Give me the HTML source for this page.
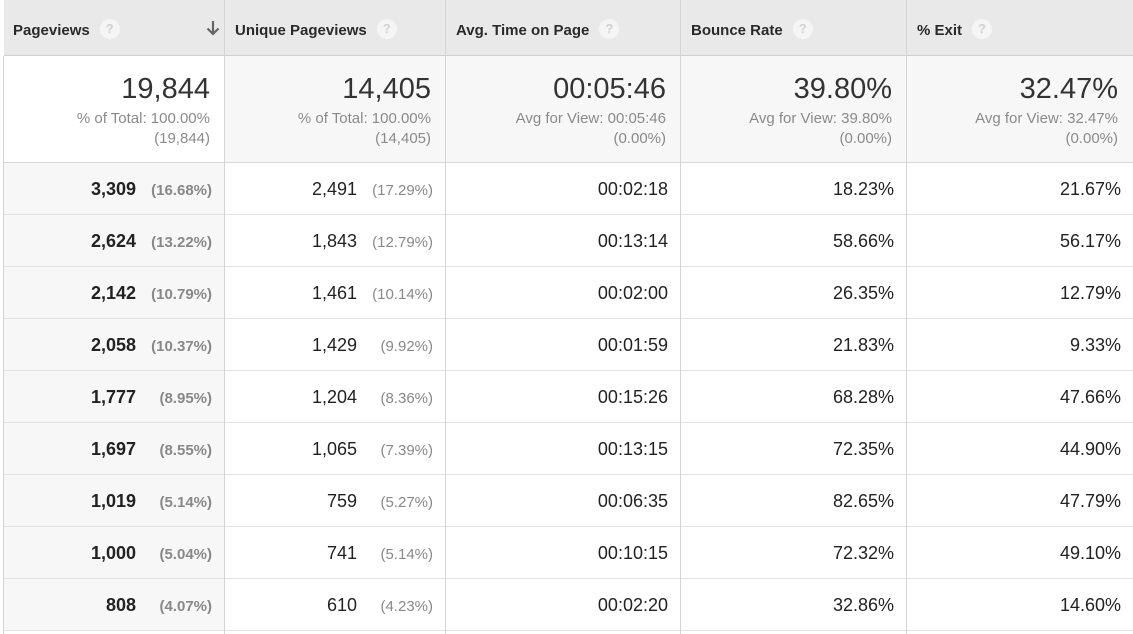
<!DOCTYPE html>
<html><head><meta charset="utf-8"><style>
*{margin:0;padding:0;box-sizing:border-box}
body{width:1133px;height:634px;overflow:hidden;background:#fff;font-family:"Liberation Sans",Arial,sans-serif;position:relative}
.col{position:absolute;top:0;height:634px;border-right:1px solid #d4d4d4}
.hd{position:absolute;top:0;left:0;right:0;height:56px;background:#e9e9e9;border-bottom:1px solid #cfcfcf;font-weight:bold;font-size:15px;color:#2a2a2a;padding:0 0 0 10px;line-height:62px;white-space:nowrap}
.q{display:inline-block;width:20px;height:20px;border-radius:50%;background:#f5f5f5;color:#d0d0d0;font-size:13px;text-align:center;line-height:20px;margin-left:10px;vertical-align:middle;position:relative;top:-2px;font-weight:bold}
.tot{position:absolute;top:56px;left:0;right:0;height:107px;border-bottom:1px solid #d8d8d8;text-align:right;padding:16px 14px 0 0;background:#f7f7f7}
.big{font-size:29px;color:#333;line-height:34px;margin-bottom:3px}
.sub{font-size:15px;color:#8a8a8a;line-height:20px}
.row{position:absolute;left:0;right:0;height:52px;border-bottom:1px solid #e2e2e2;text-align:right;padding-right:12px;font-size:18px;color:#222;line-height:52px}
.p{display:inline-block;width:76px;font-size:15px;color:#888;text-align:right}
.b{font-weight:bold}
</style></head><body>
<div style="position:absolute;left:3px;top:56px;width:1px;height:578px;background:#d4d4d4"></div>
<div class="col" style="left:4px;width:221px">
<div class="hd" style="padding-left:9px">Pageviews<span class="q">?</span><svg style="position:absolute;right:4px;top:20px" width="14" height="16" viewBox="0 0 14 16"><path d="M7 1V14M1.5 8.5L7 14L12.5 8.5" stroke="#666" stroke-width="2.2" fill="none"/></svg></div>
<div class="tot" style="background:#fff"><div class="big">19,844</div><div class="sub">% of Total: 100.00%</div><div class="sub">(19,844)</div></div>
</div>
<div class="col" style="left:225px;width:221px"><div class="hd">Unique Pageviews<span class="q">?</span></div>
<div class="tot"><div class="big">14,405</div><div class="sub">% of Total: 100.00%</div><div class="sub">(14,405)</div></div></div>
<div class="col" style="left:446px;width:235px"><div class="hd">Avg. Time on Page<span class="q">?</span></div>
<div class="tot"><div class="big">00:05:46</div><div class="sub">Avg for View: 00:05:46</div><div class="sub">(0.00%)</div></div></div>
<div class="col" style="left:681px;width:226px"><div class="hd">Bounce Rate<span class="q">?</span></div>
<div class="tot"><div class="big">39.80%</div><div class="sub">Avg for View: 39.80%</div><div class="sub">(0.00%)</div></div></div>
<div class="col" style="left:907px;width:226px;border-right:none"><div class="hd">% Exit<span class="q">?</span></div>
<div class="tot" style="padding-right:15px"><div class="big">32.47%</div><div class="sub">Avg for View: 32.47%</div><div class="sub">(0.00%)</div></div></div>
<script>
var d=[["3,309","16.68%","2,491","17.29%","00:02:18","18.23%","21.67%"],
["2,624","13.22%","1,843","12.79%","00:13:14","58.66%","56.17%"],
["2,142","10.79%","1,461","10.14%","00:02:00","26.35%","12.79%"],
["2,058","10.37%","1,429","9.92%","00:01:59","21.83%","9.33%"],
["1,777","8.95%","1,204","8.36%","00:15:26","68.28%","47.66%"],
["1,697","8.55%","1,065","7.39%","00:13:15","72.35%","44.90%"],
["1,019","5.14%","759","5.27%","00:06:35","82.65%","47.79%"],
["1,000","5.04%","741","5.14%","00:10:15","72.32%","49.10%"],
["808","4.07%","610","4.23%","00:02:20","32.86%","14.60%"]];
var cols=document.querySelectorAll('.col');
d.forEach(function(r,i){var t=163+i*52;
cols[0].insertAdjacentHTML('beforeend','<div class="row b" style="top:'+t+'px;background:#f7f7f7">'+r[0]+'<span class="p b">('+r[1]+')</span></div>');
cols[1].insertAdjacentHTML('beforeend','<div class="row" style="top:'+t+'px">'+r[2]+'<span class="p">('+r[3]+')</span></div>');
cols[2].insertAdjacentHTML('beforeend','<div class="row" style="top:'+t+'px">'+r[4]+'</div>');
cols[3].insertAdjacentHTML('beforeend','<div class="row" style="top:'+t+'px">'+r[5]+'</div>');
cols[4].insertAdjacentHTML('beforeend','<div class="row" style="top:'+t+'px">'+r[6]+'</div>');});
</script>
</body></html>
